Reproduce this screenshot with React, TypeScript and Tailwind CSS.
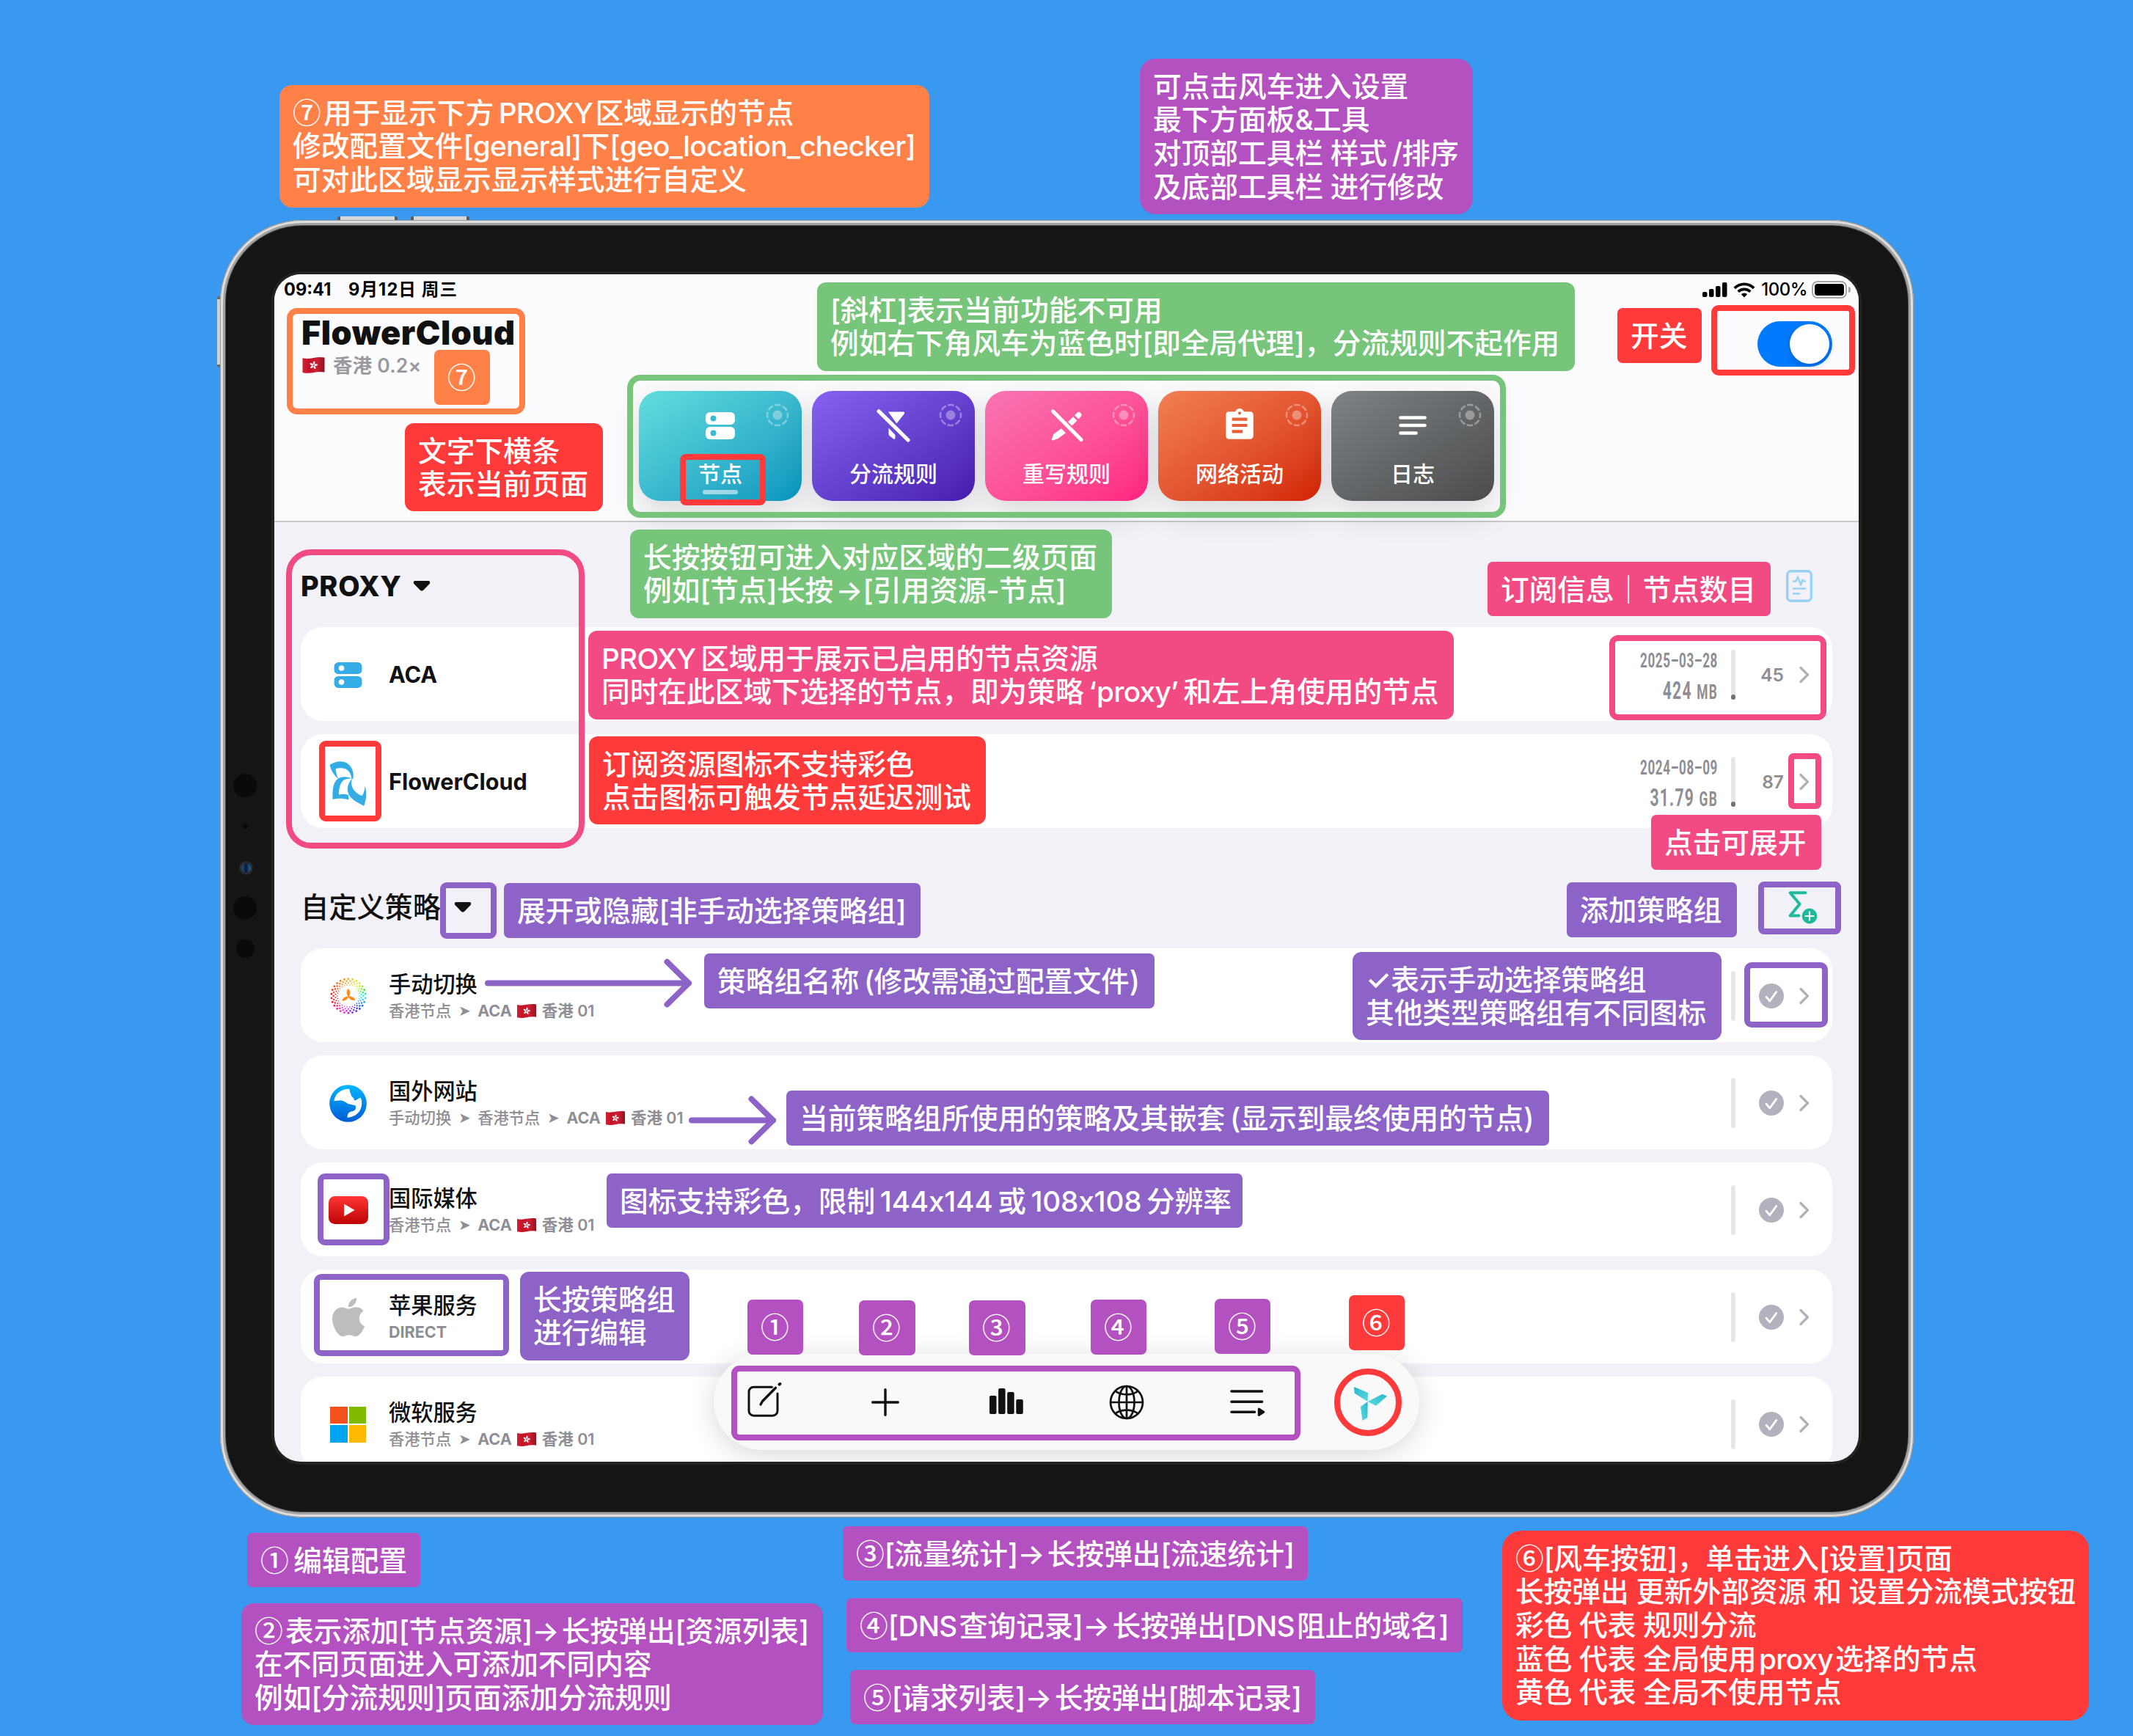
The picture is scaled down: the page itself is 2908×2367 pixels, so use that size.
import React from "react";
import { FaApple } from "react-icons/fa";
import { MdAssignment } from "react-icons/md";

/* ---------- shared glyphs ---------- */

function ServerIcon({ className, hole }: { className: string; hole: string }) {
  return (
    <svg viewBox="0 0 40 37" className={className}>
      <rect x="0" y="0" width="40" height="17" rx="6" fill="currentColor" />
      <rect x="0" y="20" width="40" height="17" rx="6" fill="currentColor" />
      <circle cx="10.5" cy="8.5" r="4" fill={hole} />
      <circle cx="10.5" cy="28.5" r="4" fill={hole} />
    </svg>
  );
}

function FilterOffIcon() {
  return (
    <svg viewBox="0 0 46 46" className="h-[46px] w-[46px]" fill="currentColor">
      <path d="M16 4.5h20.5c1.6 0 2.3 1.6 1.3 2.8L27.4 20.6z" />
      <path d="M16.5 26.5l9 9.500v4.500c0 1.200-1.300 1.800-2.200 1l-5.600-4.200c-.8-.6-1.200-1.300-1.200-2.300z" />
      <path d="M3.200 3.800L43 43" stroke="currentColor" strokeWidth="5.200" strokeLinecap="round" />
    </svg>
  );
}

function PenOffIcon() {
  return (
    <svg viewBox="0 0 46 46" className="h-[46px] w-[46px]" fill="currentColor">
      <path d="M34 9.200l3.300-3.300c1.400-1.400 3.300-1.400 4.700 0l.6.600c1.300 1.300 1.300 3.200 0 4.600l-3.200 3.200z" />
      <path d="M25 18.300l7-7 5.400 5.200-7 7z" />
      <path d="M16 27.200l6 6-10.500 7.800-7.300 2.500c-1 .3-1.700-.4-1.400-1.400l2.500-7.200z" />
      <path d="M4.500 3.800L43 42.500" stroke="currentColor" strokeWidth="5" strokeLinecap="round" />
    </svg>
  );
}

function NotesIcon() {
  return (
    <svg viewBox="0 0 38 28" className="h-[28px] w-[38px]" stroke="currentColor" strokeWidth="4.600" strokeLinecap="round">
      <path d="M2.500 3.500h33M2.500 14h33M2.500 24.500h21" />
    </svg>
  );
}

function DashedDot() {
  return (
    <svg viewBox="0 0 32 32" className="absolute right-[17px] top-[17px] h-[32px] w-[32px] text-white opacity-35">
      <circle cx="16" cy="16" r="14" fill="none" stroke="currentColor" strokeWidth="2.600" strokeDasharray="8.400 2.600" strokeDashoffset="4.200" />
      <circle cx="16" cy="16" r="6.500" fill="currentColor" />
    </svg>
  );
}

function HkFlag({ className }: { className: string }) {
  return (
    <svg viewBox="0 0 30 24" className={className}>
      <defs>
        <linearGradient id="flagShade" x1="0" x2="1">
          <stop offset="0" stopColor="#d3202f" />
          <stop offset=".3" stopColor="#c2132a" />
          <stop offset=".65" stopColor="#cf1e30" />
          <stop offset="1" stopColor="#8d1424" />
        </linearGradient>
      </defs>
      <path d="M0 2.200C5 3.400 10 3 15 2S25 .6 30 1.600v20c-5-1-10-.6-15 .4S5 23.200 0 22z" fill="url(#flagShade)" />
      {[15, 87, 159, 231, 303].map((a) => (
        <path key={a} d="M15 11.400c-1.900-.8-2.300-3.500-.4-5.200 1.700 1.200 2 3.600.4 5.200z" fill="#fff" transform={`rotate(${a} 15 12)`} />
      ))}
    </svg>
  );
}

function Caret() {
  return (
    <svg viewBox="0 0 24 16" className="h-[16px] w-[24px] text-[#111]" fill="currentColor">
      <path d="M3.200 1h17.600c2.200 0 3.200 2.200 1.800 3.900l-8.200 8.700c-1.400 1.500-3.400 1.500-4.800 0L1.400 4.900C0 3.200 1 1 3.200 1z" />
    </svg>
  );
}

function Chevron() {
  return (
    <svg viewBox="0 0 14 24" className="ml-[21px] h-[24px] w-[14px] text-[#b0b0bb]" fill="none" stroke="currentColor" strokeWidth="3.200" strokeLinecap="round" strokeLinejoin="round">
      <path d="M2 2.500l9.500 9.500L2 21.500" />
    </svg>
  );
}

function CheckDisc() {
  return (
    <svg viewBox="0 0 34 34" className="h-[34px] w-[34px]">
      <circle cx="17" cy="17" r="17" fill="#b2b2be" />
      <path d="M10 18.200l4.800 5.600 9-12.400" fill="none" stroke="#fff" strokeWidth="2.800" strokeLinecap="round" strokeLinejoin="round" />
    </svg>
  );
}

/* ---------- row icons ---------- */

function FlowerIcon() {
  return (
    <svg viewBox="470 18 164 196" className="mt-[4px] h-[65px] w-[55px]" fill="#34ade6" fillRule="evenodd">
      <path d="M477 38c23-13 43-16 63-10 25 10 40 42 32 69-8-2-6-14-11-22-6-14-18-22-36-23-10-1-17 0-24 3 1 15 6 32 12 43-18-18-33-38-36-60z" />
      <path d="M572 96c-26-11-50-10-64 2-18 14-21 47-19 83 16-5 44-6 66 1l-2-20c-14-4-27-4-39-1 0-26 6-50 21-60 10-6 24-8 37-5z" />
      <path d="M570 94c-17 16-26 42-15 66 9 22 35 32 62 48 8-20 15-54 4-84 1 17-5 32-11 42-22-7-44-27-44-52 0-9 1-14 4-20z" />
    </svg>
  );
}

const HUES = [40, 55, 90, 178, 210, 250, 282, 320, 350, 358, 370, 388, 400];

function hueAt(deg: number) {
  const slot = (deg / 360) * (HUES.length - 1);
  const i = Math.min(Math.floor(slot), HUES.length - 2);
  return HUES[i] + (HUES[i + 1] - HUES[i]) * (slot - i);
}

function RingIcon() {
  const dots: React.ReactNode[] = [];
  [22.300, 19.600, 17, 14.600].forEach((r, ring) => {
    for (let i = 0; i < 26; i++) {
      const deg = (i * 360) / 26 + ring * 7 - 0.01;
      const norm = ((deg % 360) + 360) % 360;
      const rad = (norm * Math.PI) / 180;
      dots.push(
        <circle key={`${ring}-${i}`} cx={24 + r * Math.sin(rad)} cy={24 - r * Math.cos(rad)} r={1.350 - ring * 0.2} fill={`hsl(${hueAt(norm) % 360} 88% 54%)`} />
      );
    }
  });
  return (
    <svg viewBox="0 0 48 48" className="h-[50px] w-[50px]">
      {dots}
      <g fill="#ff8a14" stroke="#ff8a14" strokeWidth=".8">
        <path d="M24 25c-2.200-3-2.600-7-.4-10.200 2.600 2.300 2.800 6.400.4 10.200z" />
        <path d="M24 25c-3.400-.2-7.200 1.800-8 4.800 3.200.8 6.600-1.400 8-4.800z" />
        <path d="M24 25c1 3 5 5 8.400 4.200C31.800 26 28 24.400 24 25z" />
      </g>
    </svg>
  );
}

function EarthIcon() {
  return (
    <svg viewBox="476 1345 152 152" className="h-[51px] w-[51px]">
      <defs>
        <linearGradient id="earth" x1="0" y1="0" x2="0" y2="1">
          <stop offset="0" stopColor="#00b8ff" />
          <stop offset="1" stopColor="#005bd6" />
        </linearGradient>
      </defs>
      <circle cx="552" cy="1421" r="75.500" fill="url(#earth)" />
      <path d="M495 1411c4-26 22-44 53-49h10c0 16 8 20 7 28 6 8 14 10 11 18 14 2 15-9 28-10 12 36-4 76-55 81 0-12 4-22 16-25 16-2 21-10 17-24-14-5-30-4-40-14-14-10-30-6-47-5z" fill="#fff" />
    </svg>
  );
}

function YoutubeIcon() {
  return (
    <svg viewBox="0 0 54 38" className="h-[38px] w-[54px]">
      <defs>
        <linearGradient id="yt" x1="0" y1="0" x2="0" y2="1">
          <stop offset="0" stopColor="#ff3434" />
          <stop offset="1" stopColor="#bd0404" />
        </linearGradient>
      </defs>
      <rect width="54" height="38" rx="8.500" fill="url(#yt)" />
      <path d="M21 10.500l14.500 8.500L21 27.500z" fill="#fff" />
    </svg>
  );
}

function WindowsIcon() {
  return (
    <div className="grid h-[49px] w-[49px] grid-cols-2 gap-[2px]">
      <div className="bg-[#f5511f]" />
      <div className="bg-[#80bb00]" />
      <div className="bg-[#00a4f0]" />
      <div className="bg-[#ffba00]" />
    </div>
  );
}

/* ---------- screen ---------- */

type Tab = { name: string; tone: string; icon: React.ReactNode; active?: boolean };

const TABS: Tab[] = [
  { name: "节点", tone: "from-[#62dedd] to-[#0096bf]", icon: <ServerIcon className="h-[37px] w-[40px]" hole="#37bdcf" />, active: true },
  { name: "分流规则", tone: "from-[#8762f2] to-[#481cb0]", icon: <FilterOffIcon /> },
  { name: "重写规则", tone: "from-[#f874b2] to-[#ff217f]", icon: <PenOffIcon /> },
  { name: "网络活动", tone: "from-[#f27f53] to-[#d32100]", icon: <MdAssignment className="h-[50px] w-[50px]" /> },
  { name: "日志", tone: "from-[#7e8386] to-[#4b4c4d]", icon: <NotesIcon /> },
];

function StatusBar() {
  return (
    <div className="flex h-[42px] items-center justify-between pl-[13px] pr-[11px] text-black">
      <div className="flex text-[23.600px] font-bold leading-none">
        <span className="w-[88px]">09:41</span>
        <span className="tracking-[1.100px]">9月12日 周三</span>
      </div>
      <div className="flex items-center">
        <svg viewBox="0 0 34 20" className="mr-[8px] h-[20px] w-[34px]" fill="currentColor">
          <rect x="0" y="13" width="6.500" height="7" rx="2" />
          <rect x="9" y="9" width="6.500" height="11" rx="2" />
          <rect x="18" y="5" width="6.500" height="15" rx="2" />
          <rect x="27" y="0" width="6.500" height="20" rx="2" />
        </svg>
        <svg viewBox="0 0 30 21" className="mr-[8px] h-[21px] w-[30px]" fill="none" stroke="currentColor" strokeWidth="3.800">
          <path d="M1.800 7.800a18.700 18.700 0 0 1 26.400 0" />
          <path d="M6.700 12.700a11.800 11.800 0 0 1 16.600 0" />
          <path d="M15 20.500l-4.200-4.300a6 6 0 0 1 8.400 0z" fill="currentColor" stroke="none" />
        </svg>
        <span className="mr-[6px] text-[24px] font-medium leading-none tracking-[-0.500px]">100%</span>
        <div className="flex h-[24px] w-[48px] rounded-[8px] border-2 border-[#a6a6a8] p-[2px]">
          <div className="w-full rounded-[4px] bg-black" />
        </div>
        <div className="ml-[2px] h-[8px] w-[3px] rounded-r-full bg-[#a6a6a8]" />
      </div>
    </div>
  );
}

function Header() {
  return (
    <header className="relative h-[338px] shrink-0 border-b-2 border-[#c8c8cd] bg-[#fcfcfe]">
      <StatusBar />
      <div className="grid grid-cols-[497px_1166px_497px]">
        <div className="pl-[37px] pt-[12px]">
          <div className="text-[45px] font-black leading-[52px] tracking-[0.450px] text-[#111]">FlowerCloud</div>
          <div className="mt-[1px] flex items-center text-[26.500px] font-semibold leading-[34px] text-[#9a9a9e]">
            <HkFlag className="ml-[1px] mr-[11px] h-[24px] w-[31px]" />
            <span className="tracking-[0.200px]">香港 0.2×</span>
          </div>
        </div>
        <nav className="mt-[117px] flex justify-between">
          {TABS.map((t) => (
            <div key={t.name} className={`relative flex h-[150px] w-[222px] flex-col items-center rounded-[28px] bg-gradient-to-br text-white shadow-[0_16px_44px_rgba(0,0,20,0.14)] ${t.tone}`}>
              <DashedDot />
              <div className="mt-[22px] flex h-[50px] items-center">{t.icon}</div>
              <div className="mt-[21px] text-[30px] font-medium leading-[40px]">{t.name}</div>
              {t.active && <div className="mt-[2px] h-[6px] w-[48px] rounded-full bg-white/55" />}
            </div>
          ))}
        </nav>
        <div className="flex justify-end pr-[36px] pt-[22px]">
          <div className="flex h-[62px] w-[102px] justify-end rounded-full bg-[#007aff] p-[4px]">
            <div className="h-[54px] w-[54px] rounded-full bg-white shadow-[0_4px_10px_rgba(0,0,0,0.2)]" />
          </div>
        </div>
      </div>
    </header>
  );
}

function Quota({ date, amount, unit }: { date: string; amount: string; unit: string }) {
  return (
    <div className="flex h-[68px] w-[170px] origin-right scale-x-[0.62] flex-col items-end justify-between whitespace-nowrap font-['Roboto',sans-serif] font-bold text-[#8e8e94]">
      <span className="mt-[2px] text-[27.500px] leading-[26px] tracking-[1px]">{date}</span>
      <span className="text-[34px] leading-[20px] tracking-[2px]">
        {amount} <span className="text-[28px]">{unit}</span>
      </span>
    </div>
  );
}

function ProxyCard({ icon, name, count, ...quota }: { icon: React.ReactNode; name: string; count: string; date: string; amount: string; unit: string }) {
  return (
    <div className="flex h-[128px] items-center rounded-[30px] bg-white pl-[9px] pr-[31px] pt-[2px]">
      <div className="flex w-[111px] justify-center">{icon}</div>
      <div className="flex-1 text-[30.600px] font-bold text-[#111]">{name}</div>
      <Quota {...quota} />
      <div className="ml-[18px] flex h-[68px] w-[6px] items-end rounded-full bg-[#e6e8e8]">
        <div className="h-[7px] w-[6px] rounded-full bg-[#717176]" />
      </div>
      <div className="w-[66px] text-right text-[24.500px] font-semibold text-[#8e8e94]">{count}</div>
      <Chevron />
    </div>
  );
}

const ARROW = "➤";
const HK = "香港 01";

function Path({ groups }: { groups: string[] }) {
  return (
    <div className="flex items-center text-[21.500px] font-bold leading-[35px] text-[#8e8e94]">
      {groups.map((g) => (
        <React.Fragment key={g}>
          <span className="text-[21.300px] font-medium">{g}</span>
          <span className="w-[36px] text-center text-[20px] font-normal">{ARROW}</span>
        </React.Fragment>
      ))}
      <span>ACA</span>
      <HkFlag className="ml-[7px] mr-[8px] h-[21px] w-[26px]" />
      <span className="font-semibold">{HK}</span>
    </div>
  );
}

function PolicyCard({ icon, name, children }: { icon: React.ReactNode; name: string; children: React.ReactNode }) {
  return (
    <div className="flex h-[128px] shrink-0 items-center rounded-[30px] bg-white pl-[9px] pr-[31px] pt-[2px]">
      <div className="flex w-[111px] justify-center">{icon}</div>
      <div className="flex-1 pt-[3px]">
        <div className="text-[30.200px] font-medium leading-[38px] text-[#111]">{name}</div>
        {children}
      </div>
      <div className="h-[68px] w-[6px] rounded-full bg-[#e6e8e8]" />
      <div className="flex w-[66px] justify-end">
        <CheckDisc />
      </div>
      <Chevron />
    </div>
  );
}

function DocIcon() {
  return (
    <svg viewBox="0 0 36 44" className="mr-[27px] h-[44px] w-[36px]" fill="none" stroke="#97d3f1" strokeLinecap="round" strokeLinejoin="round">
      <rect x="1.700" y="1.700" width="32.600" height="40.600" rx="5" strokeWidth="3.400" />
      <path d="M10 15.500h3.500l2.500-6 4 11 2.500-7 1 2H26" strokeWidth="2.400" />
      <path d="M10 25.500h16M10 32.500h8" strokeWidth="2.600" />
    </svg>
  );
}

function SigmaIcon() {
  return (
    <svg viewBox="0 0 42 46" className="mr-[19px] h-[46px] w-[42px]">
      <path d="M24.500 3.200H3.600l13 15.600L3.600 34.500h11.800" fill="none" stroke="#1fb99c" strokeWidth="4" strokeLinecap="round" strokeLinejoin="round" />
      <circle cx="30" cy="35" r="10.400" fill="#1fb99c" />
      <path d="M30 29.500v11M24.500 35h11" stroke="#fff" strokeWidth="2.200" strokeLinecap="round" />
    </svg>
  );
}

function BottomBar() {
  const cell = "flex w-[50px] justify-center";
  return (
    <div className="absolute left-[599px] top-[1472px] flex h-[131px] w-[962px] items-center justify-between rounded-full bg-[#f9f9fa] px-[44px] text-[#111] shadow-[0_6px_36px_rgba(0,0,0,0.16)]">
      <div className={cell}>
        <svg viewBox="0 0 48 48" className="-mt-[6px] h-[48px] w-[48px]" fill="none" stroke="currentColor" strokeWidth="3" strokeLinecap="round" strokeLinejoin="round">
          <path d="M34.500 6.200H9.500a6.500 6.500 0 0 0-6.500 6.500v26a6.500 6.500 0 0 0 6.500 6.500h26a6.500 6.500 0 0 0 6.500-6.500V15" />
          <path d="M19 30l2.500-4.500L39.500 7.200" strokeWidth="3.400" />
          <path d="M44.600 2.600l.8-.8" strokeWidth="4" />
        </svg>
      </div>
      <div className={cell}>
        <svg viewBox="0 0 38 38" className="h-[38px] w-[38px]" stroke="currentColor" strokeWidth="3.400" strokeLinecap="round">
          <path d="M19 1.700v34.600M1.700 19h34.600" />
        </svg>
      </div>
      <div className={cell}>
        <svg viewBox="0 0 46 35" className="-mt-[3px] h-[35px] w-[46px]" fill="currentColor">
          <rect x="0" y="10" width="9.500" height="25" rx="2" />
          <rect x="12.100" y="0" width="9.500" height="35" rx="2" />
          <rect x="24.200" y="5" width="9.500" height="30" rx="2" />
          <rect x="36.300" y="15" width="9.500" height="20" rx="2" />
        </svg>
      </div>
      <div className={cell}>
        <svg viewBox="0 0 48 48" className="h-[48px] w-[48px]" fill="none" stroke="currentColor" strokeWidth="2.700">
          <circle cx="24" cy="24" r="22" />
          <ellipse cx="24" cy="24" rx="10.500" ry="22" />
          <path d="M24 2v44M2 24h44" />
          <path d="M8.500 8.500c8 6.600 23 6.600 31 0M8.500 39.500c8-6.600 23-6.600 31 0" />
        </svg>
      </div>
      <div className={cell}>
        <svg viewBox="0 0 48 38" className="h-[38px] w-[48px]" stroke="currentColor" strokeWidth="3.600" strokeLinecap="round" strokeLinejoin="round">
          <path d="M2 4h41.500M2 18.200h41.500M2 32.200h31.500" />
          <path d="M39.300 28l6.500 4.200-6.500 4.200z" fill="currentColor" strokeWidth="3" />
        </svg>
      </div>
      <div className={cell}>
        <svg viewBox="1095 118 150 150" className="mt-[5px] h-[50px] w-[50px] translate-x-[3px]">
          <defs>
            <linearGradient id="blade" x1="0" y1="0" x2="1" y2="1">
              <stop offset="0" stopColor="#27b5cd" />
              <stop offset="1" stopColor="#5ddddb" />
            </linearGradient>
            <linearGradient id="bladeAlt" x1="1" y1="0" x2="0" y2="1">
              <stop offset="0" stopColor="#27b5cd" />
              <stop offset="1" stopColor="#5ddddb" />
            </linearGradient>
          </defs>
          <path d="M1101 124l57 24-1 36-54-34z" fill="url(#blade)" />
          <path d="M1157 184l60-31 19 9-45 39z" fill="url(#bladeAlt)" />
          <path d="M1157 184l-1 66-21 12-7-57z" fill="url(#bladeAlt)" />
        </svg>
      </div>
    </div>
  );
}

function Screen() {
  return (
    <div className="relative flex h-[1619px] w-[2160px] flex-col overflow-hidden rounded-[36px] bg-[#f2f1f8] font-['Inter','Noto_Sans_CJK_SC',sans-serif]">
      <Header />
      <main className="px-[36px]">
        <section className="mt-[31px]">
          <div className="flex h-[112px] items-center justify-between">
            <div className="flex items-center text-[38px] font-extrabold text-[#111]">
              <span className="w-[153px] tracking-[0.600px]">PROXY</span>
              <Caret />
            </div>
            <DocIcon />
          </div>
          <div className="flex flex-col gap-[18px]">
            <ProxyCard icon={<ServerIcon className="h-[35px] w-[39px] text-[#34ade6]" hole="#fff" />} name="ACA" date="2025–03–28" amount="424" unit="MB" count="45" />
            <ProxyCard icon={<FlowerIcon />} name="FlowerCloud" date="2024–08–09" amount="31.79" unit="GB" count="87" />
          </div>
        </section>
        <section className="mt-[52px]">
          <div className="flex h-[112px] items-center justify-between">
            <div className="flex items-center text-[38.200px] font-medium text-[#111]">
              <span className="w-[209px] pt-[2px]">自定义策略</span>
              <Caret />
            </div>
            <SigmaIcon />
          </div>
          <div className="flex flex-col gap-[18px]">
            <PolicyCard icon={<RingIcon />} name="手动切换">
              <Path groups={["香港节点"]} />
            </PolicyCard>
            <PolicyCard icon={<EarthIcon />} name="国外网站">
              <Path groups={["手动切换", "香港节点"]} />
            </PolicyCard>
            <PolicyCard icon={<YoutubeIcon />} name="国际媒体">
              <Path groups={["香港节点"]} />
            </PolicyCard>
            <PolicyCard icon={<FaApple className="h-[60px] w-[60px] text-[#bdbdbd]" />} name="苹果服务">
              <div className="text-[21.500px] font-bold leading-[35px] text-[#8e8e94]">DIRECT</div>
            </PolicyCard>
            <PolicyCard icon={<WindowsIcon />} name="微软服务">
              <Path groups={["香港节点"]} />
            </PolicyCard>
          </div>
        </section>
      </main>
      <BottomBar />
    </div>
  );
}

function Tablet() {
  return (
    <div className="relative h-[1769px] w-[2309px] rounded-[112px] bg-[#151515] pl-[70px] pt-[70px] shadow-[inset_0_0_0_1px_#9a9a9a,inset_0_0_0_4px_#dedede,inset_0_0_0_7px_#a2a2a2,inset_0_0_0_8px_#4a4a4a]">
      <div className="w-[2168px] rounded-[40px] bg-[#222] p-[4px]">
        <Screen />
      </div>
      {/* sensor cluster on the bezel */}
      <div className="absolute left-[18px] top-[755px] flex w-[32px] flex-col items-center">
        <div className="h-[32px] w-[32px] rounded-full bg-[#0a0a0a]" />
        <div className="mt-[36px] h-[7px] w-[7px] rounded-full bg-[#080808]" />
        <div className="mt-[44px] flex h-[19px] w-[19px] translate-x-[1px] items-center justify-center rounded-full bg-[#2a2a2c]">
          <div className="h-[13px] w-[13px] rounded-full bg-gradient-to-r from-[#1c5a92] via-[#0a1a33] to-[#1f6fae]" />
        </div>
        <div className="mt-[29px] h-[32px] w-[32px] rounded-full bg-[#0a0a0a]" />
        <div className="mt-[27px] h-[25px] w-[25px] rounded-full bg-[#0a0a0a]" />
      </div>
    </div>
  );
}

/* ---------- annotations ---------- */

const ORANGE = "bg-[#ff8147]";
const GREEN = "bg-[#77c57a]";
const RED = "bg-[#ff3a3a]";
const PINK = "bg-[#f24b84]";
const VIOLET = "bg-[#8d63c8]";
const MAGENTA = "bg-[#b451c0]";

/* "~" marks the narrow gap set between Han and Latin runs. */
function Line({ text }: { text: string }) {
  return (
    <div className="h-[45.700px] whitespace-pre">
      {text.split(/(~|[①-⑦]|[\dx]{4,}|[ -}]+)/).map((part, i) => {
        if (part === "~") return <span key={i} className="inline-block w-[3.300px]" />;
        if (/^[①-⑦]$/.test(part)) return <span key={i} className="font-['Noto_Sans_CJK_SC'] leading-none">{part}</span>;
        if (/^[\dx]{4,}$/.test(part)) return <span key={i} className="tracking-[-0.200px]">{part}</span>;
        if (/^[ -}]+$/.test(part)) return <span key={i} className="tracking-[-0.700px]">{part}</span>;
        return <React.Fragment key={i}>{part}</React.Fragment>;
      })}
    </div>
  );
}

type Note = { box: string; tone: string; lines: string[] };

const NOTES: Note[] = [
  { box: "left-[381px] top-[116px] h-[167px] w-[886px] rounded-[17px]", tone: ORANGE, lines: ["⑦~用于显示下方~~PROXY~区域显示的节点", "修改配置文件[general]下[geo_location_checker]", "可对此区域显示显示样式进行自定义"] },
  { box: "left-[1554px] top-[80px] h-[212px] w-[454px] rounded-[21px]", tone: MAGENTA, lines: ["可点击风车进入设置", "最下方面板&工具", "对顶部工具栏 样式~~/排序", "及底部工具栏 进行修改"] },
  { box: "left-[1114px] top-[385px] h-[121px] w-[1033px] rounded-[12px]", tone: GREEN, lines: ["[斜杠]表示当前功能不可用", "例如右下角风车为蓝色时[即全局代理]，分流规则不起作用"] },
  { box: "left-[859px] top-[722px] h-[121px] w-[657px] rounded-[12px]", tone: GREEN, lines: ["长按按钮可进入对应区域的二级页面", "例如[节点]长按~→[引用资源-节点]"] },
  { box: "left-[552px] top-[577px] h-[120px] w-[270px] rounded-[12px]", tone: RED, lines: ["文字下横条", "表示当前页面"] },
  { box: "left-[592px] top-[477px] h-[75px] w-[76px] rounded-[7px]", tone: ORANGE, lines: ["⑦"] },
  { box: "left-[2205px] top-[420px] h-[75px] w-[115px] rounded-[7px]", tone: RED, lines: ["开关"] },
  { box: "left-[2028px] top-[766px] h-[74px] w-[386px] rounded-[7px]", tone: PINK, lines: ["订阅信息｜节点数目"] },
  { box: "left-[802px] top-[860px] h-[121px] w-[1180px] rounded-[12px]", tone: PINK, lines: ["PROXY~~区域用于展示已启用的节点资源", "同时在此区域下选择的节点，即为策略~~‘proxy’~~和左上角使用的节点"] },
  { box: "left-[803px] top-[1004px] h-[120px] w-[541px] rounded-[12px]", tone: RED, lines: ["订阅资源图标不支持彩色", "点击图标可触发节点延迟测试"] },
  { box: "left-[2251px] top-[1111px] h-[75px] w-[232px] rounded-[7px]", tone: PINK, lines: ["点击可展开"] },
  { box: "left-[687px] top-[1204px] h-[75px] w-[568px] rounded-[7px]", tone: VIOLET, lines: ["展开或隐藏[非手动选择策略组]"] },
  { box: "left-[2136px] top-[1203px] h-[75px] w-[232px] rounded-[7px]", tone: VIOLET, lines: ["添加策略组"] },
  { box: "left-[960px] top-[1300px] h-[75px] w-[614px] rounded-[7px]", tone: VIOLET, lines: ["策略组名称~~(修改需通过配置文件)"] },
  { box: "left-[1844px] top-[1298px] h-[120px] w-[503px] rounded-[12px]", tone: VIOLET, lines: ["✓表示手动选择策略组", "其他类型策略组有不同图标"] },
  { box: "left-[1072px] top-[1487px] h-[75px] w-[1040px] rounded-[7px]", tone: VIOLET, lines: ["当前策略组所使用的策略及其嵌套~~(显示到最终使用的节点)"] },
  { box: "left-[827px] top-[1600px] h-[74px] w-[867px] rounded-[7px]", tone: VIOLET, lines: ["图标支持彩色，限制~~144x144~~或~~108x108~~分辨率"] },
  { box: "left-[709px] top-[1734px] h-[121px] w-[231px] rounded-[12px]", tone: VIOLET, lines: ["长按策略组", "进行编辑"] },
  { box: "left-[1019px] top-[1772px] h-[75px] w-[76px] rounded-[7px]", tone: MAGENTA, lines: ["①"] },
  { box: "left-[1171px] top-[1773px] h-[75px] w-[77px] rounded-[7px]", tone: MAGENTA, lines: ["②"] },
  { box: "left-[1321px] top-[1773px] h-[75px] w-[77px] rounded-[7px]", tone: MAGENTA, lines: ["③"] },
  { box: "left-[1487px] top-[1772px] h-[75px] w-[76px] rounded-[7px]", tone: MAGENTA, lines: ["④"] },
  { box: "left-[1656px] top-[1771px] h-[75px] w-[76px] rounded-[7px]", tone: MAGENTA, lines: ["⑤"] },
  { box: "left-[1839px] top-[1766px] h-[75px] w-[76px] rounded-[7px]", tone: RED, lines: ["⑥"] },
  { box: "left-[337px] top-[2090px] h-[74px] w-[236px] rounded-[7px]", tone: MAGENTA, lines: ["①~~编辑配置"] },
  { box: "left-[329px] top-[2186px] h-[166px] w-[793px] rounded-[17px]", tone: MAGENTA, lines: ["②~表示添加[节点资源]→~长按弹出[资源列表]", "在不同页面进入可添加不同内容", "例如[分流规则]页面添加分流规则"] },
  { box: "left-[1149px] top-[2081px] h-[74px] w-[634px] rounded-[7px]", tone: MAGENTA, lines: ["③[流量统计]→~长按弹出[流速统计]"] },
  { box: "left-[1154px] top-[2179px] h-[74px] w-[840px] rounded-[7px]", tone: MAGENTA, lines: ["④[DNS~查询记录]→~长按弹出[DNS~阻止的域名]"] },
  { box: "left-[1159px] top-[2277px] h-[74px] w-[634px] rounded-[7px]", tone: MAGENTA, lines: ["⑤[请求列表]→~长按弹出[脚本记录]"] },
  { box: "left-[2048px] top-[2087px] h-[259px] w-[800px] rounded-[26px]", tone: RED, lines: ["⑥[风车按钮]，单击进入[设置]页面", "长按弹出 更新外部资源 和 设置分流模式按钮", "彩色 代表 规则分流", "蓝色 代表 全局使用~proxy~选择的节点", "黄色 代表 全局不使用节点"] },
];

const FRAMES = [
  "left-[391px] top-[420px] h-[145px] w-[325px] rounded-[14px] border-[#ff8147]",
  "left-[855px] top-[511px] h-[195px] w-[1198px] rounded-[18px] border-[#77c57a]",
  "left-[927px] top-[619px] h-[70px] w-[117px] rounded-[8px] border-[#ff3a3a]",
  "left-[2333px] top-[416px] h-[96px] w-[196px] rounded-[10px] border-[#ff3a3a]",
  "left-[390px] top-[749px] h-[408px] w-[407px] rounded-[34px] border-[#f24b84]",
  "left-[435px] top-[1010px] h-[110px] w-[85px] rounded-[9px] border-[#ff3a3a]",
  "left-[2194px] top-[866px] h-[116px] w-[296px] rounded-[12px] border-[#f24b84]",
  "left-[2438px] top-[1027px] h-[76px] w-[45px] rounded-[7px] border-[#f24b84]",
  "left-[600px] top-[1203px] h-[77px] w-[77px] rounded-[9px] border-[#8d63c8]",
  "left-[2397px] top-[1202px] h-[72px] w-[113px] rounded-[8px] border-[#8d63c8]",
  "left-[2378px] top-[1312px] h-[89px] w-[114px] rounded-[10px] border-[#8d63c8]",
  "left-[433px] top-[1600px] h-[98px] w-[98px] rounded-[10px] border-[#8d63c8]",
  "left-[428px] top-[1737px] h-[112px] w-[266px] rounded-[10px] border-[#8d63c8]",
  "left-[997px] top-[1862px] h-[102px] w-[776px] rounded-[11px] border-[#b451c0]",
  "left-[1819px] top-[1866px] h-[92px] w-[92px] rounded-full border-[#ff3a3a]",
];

function Annotations() {
  return (
    <>
      {FRAMES.map((f) => (
        <div key={f} className={`absolute border-8 ${f}`} />
      ))}
      {NOTES.map((n) => (
        <div key={n.box} className={`absolute pl-[18px] pt-[15.500px] font-['Inter','Noto_Sans_CJK_SC',sans-serif] text-[38.700px] font-medium leading-[45.700px] text-white ${n.box} ${n.tone}`}>
          {n.lines.map((l) => (
            <Line key={l} text={l} />
          ))}
        </div>
      ))}
      <svg viewBox="0 0 284 70" className="absolute left-[660px] top-[1305px] h-[70px] w-[284px]" fill="none" stroke="#8d63c8" strokeWidth="8" strokeLinecap="round" strokeLinejoin="round">
        <path d="M5 35.500h274M249.500 6.500l29.500 29-29.500 29" />
      </svg>
      <svg viewBox="0 0 120 70" className="absolute left-[938px] top-[1492px] h-[70px] w-[120px]" fill="none" stroke="#8d63c8" strokeWidth="8" strokeLinecap="round" strokeLinejoin="round">
        <path d="M5 35.500h111M86.500 6.500l29.500 29-29.500 29" />
      </svg>
    </>
  );
}

export default function App() {
  return (
    <div className="relative h-[2367px] w-[2908px] overflow-hidden bg-[#3998f0] pl-[300px] pt-[300px]">
      {/* hardware buttons peeking out from behind the frame */}
      <div className="absolute left-[460px] top-[295px] h-[12px] w-[82px] rounded-t-[3px] border-x-4 border-[#5c5c5c] bg-[#d8d8d8]" />
      <div className="absolute left-[560px] top-[295px] h-[12px] w-[80px] rounded-t-[3px] border-x-4 border-[#5c5c5c] bg-[#d8d8d8]" />
      <div className="absolute left-[296px] top-[404px] h-[97px] w-[12px] rounded-l-[3px] border-y-4 border-[#6c6c6c] bg-[#d0d0d0]" />
      <Tablet />
      <Annotations />
    </div>
  );
}
